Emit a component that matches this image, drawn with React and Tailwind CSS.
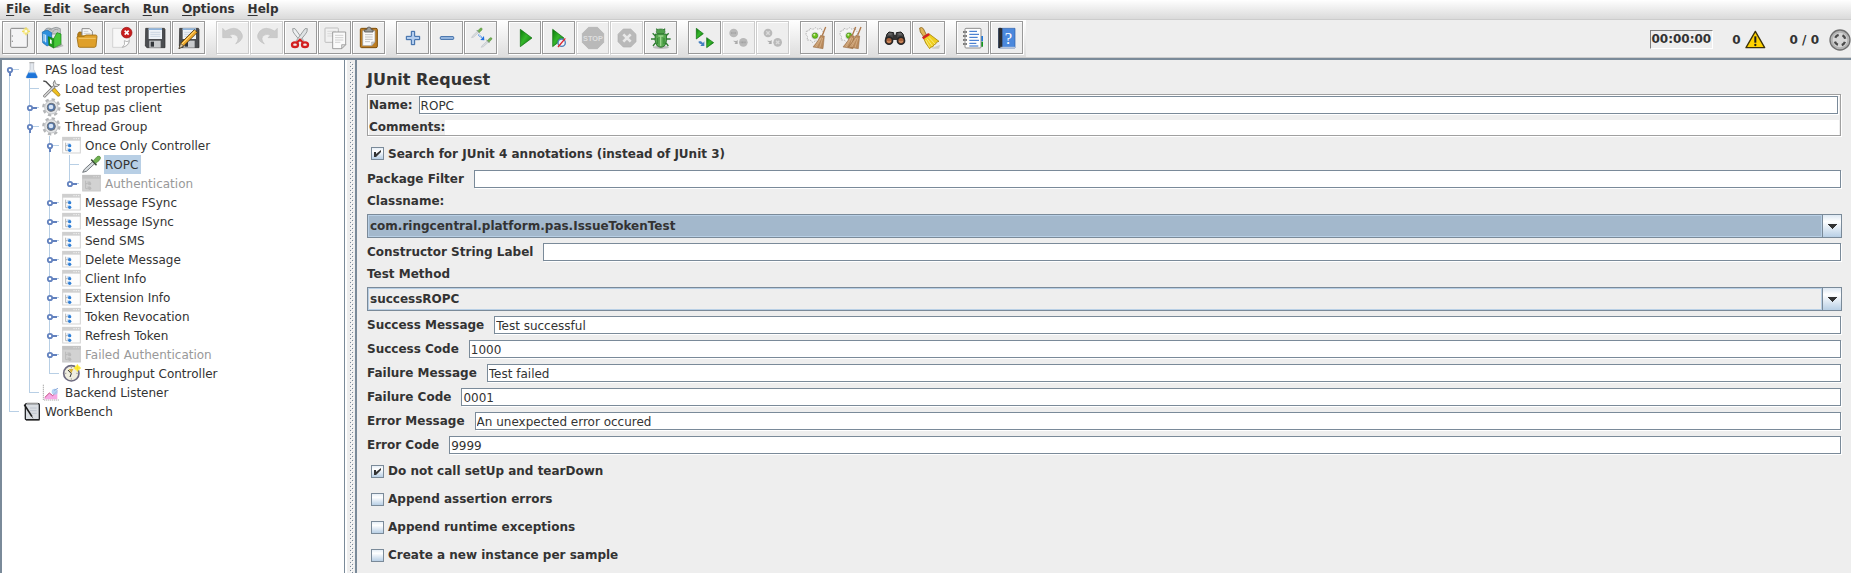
import React, { useId } from "react";

const page = { fill: "#fbfbfb", stroke: "#8a8a8a", strokeWidth: 3 };

function Pencil() {
  return (
    <g>
      <path d="M12 74 L17 58 L58 17 L67 25 L26 66 Z" fill="#f0a92a" stroke="#4a3510" strokeWidth="2.5" />
      <path d="M20 61 L60 20" stroke="#ffe08a" strokeWidth="3" />
      <path d="M12 74 L17 58 L26 66 Z" fill="#e8cfa0" stroke="#333" strokeWidth="2" />
    </g>
  );
}

function Floppy() {
  return (
    <g>
      <path d="M14 13 H70 L72 16 V71 H18 L13 66 Z" fill="#4b4d50" stroke="#2b2b2b" strokeWidth="2" />
      <rect x="23" y="13" width="40" height="32" fill="#eef3f8" />
      <path d="M23 13 H63 V18 H23 Z" fill="#8fb4dc" />
      <path d="M28 25 H58 M28 31 H58 M28 37 H58" stroke="#b9c7d6" strokeWidth="2" />
      <rect x="25" y="50" width="34" height="21" fill="#c9cbcd" />
      <rect x="29" y="53" width="10" height="15" fill="#33363a" />
    </g>
  );
}

function Dropper({ x, y, s = 1, edge = "#5b6166", collar = "#3a4a3a" }) {
  return (
    <g transform={`translate(${x} ${y}) scale(${s})`}>
      <path d="M1 50 L6 41 L32 17 L38 23 L12 47 Z" fill="#d8dde0" stroke={edge} strokeWidth="2.5" />
      <path d="M28 13 L41 27" stroke={collar} strokeWidth="5" strokeLinecap="round" />
      <path d="M33 15 L44 3 Q51 -1 54 4 Q56 9 50 15 L40 23 Z" fill="#6fb04f" stroke="#4b8436" strokeWidth="2" />
    </g>
  );
}

function Octagon({ a, b, fill }) {
  const c = (b - a) * 0.29;
  return (
    <path
      d={`M${a + c} ${a} H${b - c} L${b} ${a + c} V${b - c} L${b - c} ${b} H${a + c} L${a} ${b - c} V${a + c} Z`}
      fill={fill}
      stroke="#b0b0b0"
      strokeWidth="2"
    />
  );
}

function GearPage() {
  return (
    <g>
      <path d="M10 22 L18 20 L20 13 L30 16 L38 11 L45 16 L54 12 L57 20 L63 26 L58 34 L62 44 L54 48 L48 54 L38 50 L28 55 L22 48 L12 48 L14 38 L9 32 Z" fill="#f5f5f5" stroke="#a9a9a9" strokeWidth="2.5" strokeDasharray="5 3" />
      <circle cx="36" cy="35" r="12" fill="#dcdcdc" />
      <circle cx="36" cy="35" r="8" fill="#6cc21c" stroke="#3f8d12" strokeWidth="2" />
      <circle cx="34" cy="32" r="3" fill="#d8f5a8" />
    </g>
  );
}

function WoodBroom({ x = 0 }) {
  return (
    <g transform={`translate(${x} 0)`}>
      <path d="M68 9 L58 34" stroke="#b0794a" strokeWidth="4" />
      <path d="M53 34 L64 36 Q62 58 60 74 L30 69 Q46 52 53 34 Z" fill="#b98a5c" stroke="#94683e" strokeWidth="1.5" />
      <path d="M56 40 L40 69 M59 42 L50 71 M53 42 L36 68" stroke="#dfbd94" strokeWidth="2" />
    </g>
  );
}

const GreenGrad = ({ id }) => (
  <defs>
    <linearGradient id={id} x1="0" y1="0" x2="1" y2="1">
      <stop offset="0" stopColor="#087a08" />
      <stop offset="0.45" stopColor="#35b52b" />
      <stop offset="1" stopColor="#047004" />
    </linearGradient>
  </defs>
);

function Play({ d }) {
  const id = useId();
  return (
    <g>
      <GreenGrad id={id} />
      <path d={d} fill={`url(#${id})`} stroke="#0a6d0a" strokeWidth="2" strokeLinejoin="round" />
    </g>
  );
}

const undoShape = "M11 13 L19 21 Q48 4 64 22 Q82 44 50 60 Q64 42 51 34 Q42 28 32 34 L39 41 L11 41 Z";

const art = {
  new: (
    <g>
      <rect x="17" y="13" width="50" height="57" rx="3" fill="#ececee" stroke="#858585" strokeWidth="3" />
      <rect x="20" y="16" width="44" height="51" fill="#f4f4f5" />
      <path d="M22 34 V38 M22 50 V54" stroke="#888" strokeWidth="3" />
      <circle cx="63" cy="22" r="10" fill="#f7ea8e" opacity="0.8" />
      <path d="M63 10 V34 M51 22 H75" stroke="#f2dc4a" strokeWidth="3" />
      <circle cx="63" cy="22" r="4" fill="#fffdf0" />
    </g>
  ),
  templates: (
    <g>
      <path d="M16 22 Q20 8 38 14 Q52 6 64 14 V30 H18 Z" fill="#c6c9cb" stroke="#7d8285" strokeWidth="2" />
      <path d="M24 24 Q30 12 40 18 M40 26 Q46 12 58 18" stroke="#888" strokeWidth="2" fill="none" />
      <path d="M10 24 L24 18 L38 26 V60 L24 66 L11 56 Z" fill="#2d8fdc" stroke="#1565a8" strokeWidth="2" />
      <path d="M15 30 V52 M20 32 V55" stroke="#e6f3ff" strokeWidth="3" />
      <path d="M28 38 L44 44 V72 L30 64 Z" fill="#1e9a1c" stroke="#0f6d10" strokeWidth="2" />
      <path d="M44 44 L54 26 L66 30 V62 L44 72 Z" fill="#46c83a" stroke="#12800f" strokeWidth="2" />
      <path d="M33 46 V58 L38 60 V48 Z" fill="#fff" />
      <path d="M66 58 L74 66 L56 72 H44" fill="#8a8a8a" opacity="0.5" />
    </g>
  ),
  open: (
    <g>
      <path d="M14 30 L18 24 H26 V40 H14 Z" fill="#b97e12" stroke="#8c5e0c" strokeWidth="2" />
      <path d="M27 40 V14 H49 L58 22 V40 Z" {...page} />
      <path d="M32 22 H46 M32 28 H53 M32 34 H53" stroke="#b5b5b5" strokeWidth="2" />
      <path d="M18 34 H68 V66 H18 Z" fill="#c28a1a" />
      <path d="M12 40 Q12 37 16 37 H34 L38 33 H68 Q72 33 72 38 L69 66 Q68 70 64 70 H20 Q16 70 16 66 Z" fill="#dfa02a" stroke="#9c6b10" strokeWidth="2.5" />
      <path d="M17 43 H68" stroke="#f4c96c" strokeWidth="3" />
    </g>
  ),
  close: (
    <g>
      <path d="M17 13 H67 V52 Q66 66 46 70 H17 Z" fill="#f7f7f7" stroke="#c4c4c4" strokeWidth="2" />
      <path d="M46 70 Q56 62 52 50 Q60 56 67 50 Q64 66 46 70 Z" fill="#fff" stroke="#999" strokeWidth="2" />
      <circle cx="59" cy="26" r="16" fill="#c81e1e" stroke="#951010" strokeWidth="2" />
      <path d="M53 20 L65 32 M65 20 L53 32" stroke="#fff" strokeWidth="5" />
    </g>
  ),
  save: <Floppy />,
  saveas: (
    <g>
      <Floppy />
      <Pencil />
    </g>
  ),
  undo: <path d={undoShape} fill="#cbcbcb" stroke="#bdbdbd" strokeWidth="1.5" />,
  redo: <path d={undoShape} transform="translate(84 0) scale(-1 1)" fill="#cbcbcb" stroke="#bdbdbd" strokeWidth="1.5" />,
  cut: (
    <g>
      <path d="M17 14 Q16 24 24 32 L44 56 L50 50 L24 14 Z" fill="#eceff0" stroke="#8b8f90" strokeWidth="2.5" />
      <path d="M61 14 Q62 24 54 32 L34 56 L28 50 L54 14 Z" fill="#dfe3e4" stroke="#8b8f90" strokeWidth="2.5" />
      <ellipse cx="24" cy="62" rx="9" ry="7" fill="none" stroke="#d31f1f" strokeWidth="7" />
      <ellipse cx="54" cy="62" rx="9" ry="7" fill="none" stroke="#d31f1f" strokeWidth="7" />
      <path d="M30 55 L39 47 L48 55" stroke="#d31f1f" strokeWidth="6" fill="none" />
    </g>
  ),
  copy: (
    <g>
      <rect x="12" y="12" width="40" height="43" rx="2" fill="#f1f1f1" stroke="#b5b5b5" strokeWidth="2.5" />
      <path d="M19 22 H45 M19 29 H45 M19 36 H45" stroke="#cfcfcf" strokeWidth="2" />
      <path d="M35 24 H74 V62 L62 74 H35 Z" fill="#fafafa" stroke="#8e8e8e" strokeWidth="2.5" />
      <path d="M42 34 H67 M42 41 H67 M42 48 H67 M42 55 H58" stroke="#bcbcbc" strokeWidth="2" />
      <path d="M62 74 V62 H74 Z" fill="#ddd" stroke="#8e8e8e" strokeWidth="2" />
    </g>
  ),
  paste: (
    <g>
      <rect x="16" y="13" width="51" height="58" rx="4" fill="#bd7d22" stroke="#7d4d0a" strokeWidth="3" />
      <path d="M23 20 H60 V54 L50 65 H23 Z" fill="#fafafa" stroke="#999" strokeWidth="2" />
      <path d="M30 32 H53 M30 39 H53 M30 46 H53 M30 53 H45" stroke="#b4b4b4" strokeWidth="2.5" />
      <path d="M50 65 V54 H60 Z" fill="#d0d0d0" stroke="#999" strokeWidth="1.5" />
      <path d="M29 24 V17 H35 Q36 9 42 9 Q48 9 49 17 H54 V24 Z" fill="#9b9d9b" stroke="#555" strokeWidth="2.5" />
    </g>
  ),
  plus: <path d="M37 22 H47 V37 H62 V47 H47 V62 H37 V47 H22 V37 H37 Z" fill="#b3cdee" stroke="#3465a4" strokeWidth="3" strokeLinejoin="round" />,
  minus: <rect x="22" y="38" width="40" height="8" rx="2" fill="#a5c3e8" stroke="#3465a4" strokeWidth="3" />,
  toggle: (
    <g>
      <Dropper x={13} y={11} s={0.6} edge="#b4b9bc" collar="#7d907d" />
      <Dropper x={42} y={40} s={0.6} edge="#b4b9bc" collar="#7d907d" />
      <path d="M34 32 L46 42" stroke="#2f7fe8" strokeWidth="4" strokeDasharray="3 2" />
      <path d="M52 49 L51 36 L40 48 Z" fill="#1d6fe0" />
    </g>
  ),
  play: <Play d="M28 16 L63 42 L28 68 Z" />,
  playfast: (
    <g>
      <Play d="M23 16 L57 42 L23 68 Z" />
      <circle cx="50" cy="56" r="11" fill="#eef2f8" stroke="#4f7fb8" strokeWidth="4" />
      <path d="M39 69 L61 43" stroke="#e0242c" strokeWidth="4" />
    </g>
  ),
  stop: (
    <g>
      <Octagon a={10} b={74} fill="#b9b9b9" />
      <text x="42" y="50" textAnchor="middle" fontSize="22" fontWeight="700" fontFamily="Liberation Sans, sans-serif" fill="#dedede">STOP</text>
    </g>
  ),
  shutdown: (
    <g>
      <Octagon a={15} b={69} fill="#b9b9b9" />
      <path d="M31 31 L53 53 M53 31 L31 53" stroke="#e8e8e8" strokeWidth="8" />
    </g>
  ),
  bug: (
    <g>
      <ellipse cx="42" cy="70" rx="24" ry="5" fill="#bdbdbd" />
      <path d="M28 14 L34 22 M54 14 L48 22 M17 28 L25 36 L29 34 M65 28 L57 36 L53 34 M12 45 H28 M54 45 H71 M18 66 L24 58 L30 56 M64 66 L58 58 L52 56" stroke="#2f7d32" strokeWidth="4" fill="none" />
      <ellipse cx="41" cy="23" rx="13" ry="8" fill="#4f9f4a" stroke="#256b28" strokeWidth="2" />
      <path d="M25 30 H58 Q62 50 54 64 Q42 76 29 64 Q21 50 25 30 Z" fill="#57a84f" stroke="#256b28" strokeWidth="2.5" />
      <path d="M34 36 H49 M41 36 V66" stroke="#9bd48c" strokeWidth="4" />
      <path d="M32 42 V60 M51 42 V60" stroke="#348a35" strokeWidth="3" />
    </g>
  ),
  remotestart: (
    <g>
      <Play d="M16 13 L37 29 L16 45 Z" />
      <Play d="M47 41 L68 56 L47 71 Z" />
      <path d="M23 52 L30 52 L36 57 L40 52 V66 H28 L32 61 Q26 60 23 56 Z" fill="#4680c0" />
    </g>
  ),
  remotestop: (
    <g>
      <circle cx="26" cy="27" r="13" fill="#b9b9b9" />
      <circle cx="55" cy="55" r="13" fill="#b9b9b9" />
      <path d="M18 27 H34 M47 55 H63" stroke="#a2a2a2" strokeWidth="5" strokeDasharray="3 1" />
      <path d="M24 50 L34 51 L38 48 V60 H28 L32 56 Z" fill="#ababab" />
    </g>
  ),
  remoteshut: (
    <g>
      <circle cx="27" cy="27" r="13" fill="#b9b9b9" />
      <circle cx="56" cy="55" r="13" fill="#b9b9b9" />
      <path d="M22 22 L32 32 M32 22 L22 32 M51 50 L61 60 M61 50 L51 60" stroke="#dadada" strokeWidth="4" />
      <path d="M24 50 L34 51 L38 48 V60 H28 L32 56 Z" fill="#ababab" />
    </g>
  ),
  clear: (
    <g>
      <GearPage />
      <WoodBroom />
    </g>
  ),
  clearall: (
    <g>
      <GearPage />
      <WoodBroom x={-12} />
      <WoodBroom x={4} />
    </g>
  ),
  search: (
    <g>
      <path d="M18 30 L24 24 L38 26 V44 H14 Z M66 30 L60 24 L46 26 V44 H70 Z" fill="#4a4a4a" stroke="#1d1d1d" strokeWidth="3" strokeLinejoin="round" />
      <rect x="35" y="32" width="14" height="16" fill="#333" />
      <circle cx="24" cy="50" r="13" fill="#262626" />
      <circle cx="60" cy="50" r="13" fill="#262626" />
      <circle cx="24" cy="50" r="8" fill="#a8613a" />
      <circle cx="60" cy="50" r="8" fill="#a8613a" />
      <path d="M19 52 Q24 58 29 52 M55 52 Q60 58 65 52" stroke="#e6a878" strokeWidth="3" fill="none" />
      <path d="M22 30 H32 M52 30 H62" stroke="#999" strokeWidth="2" />
    </g>
  ),
  broom: (
    <g>
      <path d="M56 70 L76 62 L72 74 H50 Z" fill="#b7b7b7" opacity="0.6" />
      <path d="M14 12 Q20 8 25 14 L34 32 L26 38 L16 24 Z" fill="#e0b458" stroke="#8b6518" strokeWidth="2.5" />
      <path d="M24 38 L43 30 L72 52 Q62 54 62 60 Q54 62 54 68 Q46 68 44 74 Q30 58 24 38 Z" fill="#efcf1f" stroke="#a8860a" strokeWidth="2.5" />
      <path d="M36 44 L52 66 M42 40 L60 60 M32 48 L44 70" stroke="#fbee8c" strokeWidth="2.5" />
      <path d="M21 40 L40 27 L45 33 L25 46 Z" fill="#d32323" />
    </g>
  ),
  notebook: (
    <g>
      <path d="M66 36 H72 V52 H66 Z" fill="#1f7ae0" />
      <path d="M66 53 H72 V68 H66 Z" fill="#0f9a1a" />
      <rect x="18" y="13" width="48" height="59" rx="3" fill="#fdfdfd" stroke="#8d8d8d" strokeWidth="3" />
      <path d="M31 22 H54 M31 31 H60 M31 40 H56 M31 49 H60 M31 58 H52 M31 66 H58" stroke="#2868c8" strokeWidth="3" />
      <path d="M12 24 H24 M12 36 H24 M12 48 H24 M12 60 H24" stroke="#555" strokeWidth="5" strokeDasharray="5 2" />
    </g>
  ),
  help: (
    <g>
      <path d="M17 13 H66 V72 H17 Z" fill="#4b88dc" stroke="#2e5ea8" strokeWidth="2" />
      <path d="M16 13 Q20 10 28 13 V72 H16 Z" fill="#2a2c30" />
      <path d="M22 70 H66" stroke="#cfd7e2" strokeWidth="3" />
      <text x="46" y="59" textAnchor="middle" fontSize="50" fontFamily="Liberation Serif, serif" fill="#fff">?</text>
    </g>
  ),
};

const groups = [
  [["new", "New"], ["templates", "Templates"], ["open", "Open"], ["close", "Close"], ["save", "Save"], ["saveas", "Save as"]],
  [["undo", "Undo", true], ["redo", "Redo", true], ["cut", "Cut"], ["copy", "Copy"], ["paste", "Paste"]],
  [["plus", "Expand all"], ["minus", "Collapse all"], ["toggle", "Toggle"]],
  [["play", "Start"], ["playfast", "Start no pauses"], ["stop", "Stop", true], ["shutdown", "Shutdown", true], ["bug", "Debug"]],
  [["remotestart", "Remote start all"], ["remotestop", "Remote stop all", true], ["remoteshut", "Remote shutdown all", true]],
  [["clear", "Clear"], ["clearall", "Clear all"]],
  [["search", "Search"], ["broom", "Reset search"]],
  [["notebook", "Function helper"], ["help", "Help"]],
];

function ToolButton({ icon, label, disabled }) {
  return (
    <button
      type="button"
      aria-label={label}
      disabled={disabled}
      className="mr-px flex size-[33px] shrink-0 items-center justify-center border border-[#999999] bg-[#eeeeee] shadow-[inset_1px_1px_0_#ffffff,1px_1px_0_#ffffff] disabled:border-[#cccccc]"
    >
      <svg viewBox="0 0 81 81" className="size-[27px]">{art[icon]}</svg>
    </button>
  );
}

/* ---------- test plan tree ---------- */

function ControllerIcon({ off }) {
  return (
    <g>
      <rect x="2" y="4" width="53" height="47" fill={off ? "#d2d2d2" : "#fdfdfd"} stroke={off ? "#cacaca" : "#d3d3d3"} strokeWidth="3" />
      <rect x="1" y="3" width="55" height="11" fill={off ? "#c2c2c2" : "#cfcfcf"} />
      <path d="M34 8 H52" stroke={off ? "#d8d8d8" : "#f0f0f0"} strokeWidth="3" strokeDasharray="4 3" />
      <path d="M11 20 V44 H18 M11 29 H18" stroke={off ? "#b8b8b8" : "#b4b4b4"} strokeWidth="3" fill="none" />
      <path d="M16 22 H25 V30 H16 Z M16 37 H25 V45 H16 Z" fill={off ? "#c2c2c2" : "#b4cfee"} />
      <circle cx="23" cy="29" r="5" fill={off ? "#bababa" : "#2f7fd6"} />
      <circle cx="23" cy="43" r="5" fill={off ? "#bababa" : "#2f7fd6"} />
    </g>
  );
}

const treeArt = {
  flask: (
    <g>
      <path d="M24 8 H35 V28 L46 50 Q47 54 43 54 H15 Q11 54 13 50 L24 28 Z" fill="#e3e8ee" stroke="#b4bac2" strokeWidth="2" />
      <path d="M20 37 H39 L46 50 Q47 54 43 54 H15 Q11 54 13 50 Z" fill="#1d74d8" />
      <path d="M20 38 H39" stroke="#9cc8f4" strokeWidth="3" />
      <path d="M22 8 H37" stroke="#aaa" strokeWidth="3" />
    </g>
  ),
  tools: (
    <g>
      <path d="M4 6 L12 8 L34 31" stroke="#4c4c4c" strokeWidth="4" fill="none" />
      <path d="M31 29 L38 27 L54 46 Q55 52 48 52 L30 35 Z" fill="#f0c020" stroke="#8a6a08" strokeWidth="2" />
      <path d="M8 51 L38 21" stroke="#777" strokeWidth="9" strokeLinecap="round" />
      <path d="M8 51 L38 21" stroke="#d6d6d6" strokeWidth="5" strokeLinecap="round" />
      <path d="M38 4 Q30 12 36 22 Q46 26 53 17 L44 16 L40 12 Z" fill="#e0e0e0" stroke="#777" strokeWidth="2.5" />
    </g>
  ),
  gear: (
    <g>
      <circle cx="28" cy="28" r="24" fill="none" stroke="#b3b5b7" strokeWidth="7" strokeDasharray="10 8.85" />
      <circle cx="28" cy="28" r="20" fill="#e2e4e6" stroke="#b9bbbd" strokeWidth="2.5" />
      <circle cx="28" cy="28" r="12" fill="#5577a8" stroke="#6b7078" strokeWidth="3" />
      <circle cx="27" cy="27" r="7" fill="#d6e4f6" />
    </g>
  ),
  ctrl: <ControllerIcon />,
  ctrlOff: <ControllerIcon off />,
  dropper: <Dropper x={1} y={2} />,
  clock: (
    <g>
      <circle cx="28" cy="28" r="23" fill="#f0eedf" stroke="#6e6b80" strokeWidth="5" />
      <path d="M28 28 L20 15 H34 Z" fill="#d9b23a" />
      <path d="M28 29 L18 18 M28 29 L24 39" stroke="#333" strokeWidth="3" />
      <path d="M28 9 V13 M28 43 V47 M9 28 H13 M43 28 H47" stroke="#888" strokeWidth="2.5" />
      <circle cx="46" cy="12" r="8" fill="#fff04a" />
      <path d="M46 1 V23 M35 12 H57" stroke="#f8e020" strokeWidth="3" />
    </g>
  ),
  chart: (
    <g>
      <path d="M4 5 V51 H51" stroke="#9a9a9a" strokeWidth="2.5" fill="none" strokeDasharray="4 2" />
      <path d="M8 49 V44 L22 30 L32 38 L46 26 V49 Z" fill="#f6a8e4" />
      <path d="M8 44 L22 30 L32 38 L46 24" stroke="#c2477e" strokeWidth="3" fill="none" />
      <circle cx="38" cy="26" r="9" fill="#a8cdf2" opacity="0.85" />
      <path d="M36 22 L48 16" stroke="#8aa8d8" strokeWidth="3" />
    </g>
  ),
  bench: (
    <g>
      <rect x="10" y="5" width="42" height="48" rx="3" fill="#d9dde2" stroke="#26282b" strokeWidth="4" />
      <path d="M14 4 H48" stroke="#9a9a9a" strokeWidth="4" />
      <path d="M24 18 H44 M24 26 H44 M28 34 H44" stroke="#b2bac6" strokeWidth="2" />
      <path d="M7 8 L30 44" stroke="#1b1b1b" strokeWidth="5" />
      <path d="M30 44 L33 49" stroke="#777" strokeWidth="3" />
      <path d="M12 54 H53" stroke="#1b1b1b" strokeWidth="3" />
    </g>
  ),
};

/* guides: one letter per 20px column before the icon.
   "|" line passes through, "t" leaf branch, "l" last leaf,
   "c" collapsed node, "e" last collapsed node, "o" open node, "r" open root */
const rows = [
  ["r", "flask", "PAS load test"],
  ["|t", "tools", "Load test properties"],
  ["|c", "gear", "Setup pas client"],
  ["|o", "gear", "Thread Group"],
  ["||o", "ctrl", "Once Only Controller"],
  ["|||t", "dropper", "ROPC"],
  ["|||e", "ctrlOff", "Authentication"],
  ["||c", "ctrl", "Message FSync"],
  ["||c", "ctrl", "Message ISync"],
  ["||c", "ctrl", "Send SMS"],
  ["||c", "ctrl", "Delete Message"],
  ["||c", "ctrl", "Client Info"],
  ["||c", "ctrl", "Extension Info"],
  ["||c", "ctrl", "Token Revocation"],
  ["||c", "ctrl", "Refresh Token"],
  ["||c", "ctrlOff", "Failed Authentication"],
  ["||l", "clock", "Throughput Controller"],
  ["|l", "chart", "Backend Listener"],
  ["l", "bench", "WorkBench"],
];

function Guide({ kind }) {
  const up = "|tlcoe".includes(kind);
  const down = "|tcor".includes(kind);
  const node = "coer".includes(kind);
  return (
    <svg viewBox="0 0 20 19" className="h-[19px] w-5 shrink-0">
      {up && <rect x="7" y="0" width="1" height="10" fill="#b8cfe5" />}
      {down && <rect x="7" y="9" width="1" height="10" fill="#b8cfe5" />}
      {kind !== "|" && <rect x="7" y="9" width="10" height="1" fill="#b8cfe5" />}
      {node && (
        <g>
          {"or".includes(kind) ? (
            <rect x="7" y="11" width="2" height="5" fill="#6382bf" />
          ) : (
            <rect x="10" y="9" width="5" height="2" fill="#6382bf" />
          )}
          <circle cx="8" cy="10" r="2.2" fill="#fff" stroke="#6382bf" strokeWidth="1.8" />
        </g>
      )}
    </svg>
  );
}

function Tree() {
  return (
    <ul role="tree" className="w-[343px] shrink-0 border-r border-[#7a8a99] bg-white">
      {rows.map(([guides, icon, name]) => (
        <li
          key={name}
          role="treeitem"
          aria-selected={name === "ROPC"}
          className={`flex h-[19px] items-center ${icon === "ctrlOff" ? "text-[#999999]" : "text-[#333333]"}`}
        >
          {guides.split("").map((g, i) => (
            <Guide key={i} kind={g} />
          ))}
          <svg viewBox="0 0 60 57" className="h-[19px] w-5 shrink-0">{treeArt[icon]}</svg>
          <span className={`ml-[2px] h-[19px] pr-[3px] pl-px leading-[21px] ${name === "ROPC" ? "bg-[#b8cfe5]" : ""}`}>{name}</span>
        </li>
      ))}
    </ul>
  );
}

function Divider() {
  return (
    <div className="w-[10px] shrink-0 border-l-2 border-white bg-[#eeeeee] pt-[2px] pl-[3px]">
      <svg className="h-full w-[4px]">
        <defs>
          <pattern id="bumps" width="4" height="4" patternUnits="userSpaceOnUse">
            <rect width="1" height="1" fill="#7a8a99" />
            <rect x="2" y="2" width="1" height="1" fill="#7a8a99" />
            <rect x="1" y="1" width="1" height="1" fill="#ffffff" />
            <rect x="3" y="3" width="1" height="1" fill="#ffffff" />
          </pattern>
        </defs>
        <rect width="4" height="100%" fill="url(#bumps)" />
      </svg>
    </div>
  );
}

/* ---------- sampler form ---------- */

const fieldBox =
  "mr-px mb-px h-[18px] min-w-0 flex-1 border border-[#7a8a99] bg-white px-px pt-[2px] leading-[14px] text-[#333333] shadow-[1px_1px_0_#ffffff] outline-none";

function Field({ id, label, value = "", tight = false }) {
  return (
    <div className="flex h-[19px] items-center">
      <label htmlFor={id} className={`font-bold leading-[19px] ${tight ? "pr-[6px]" : "pr-[10px]"}`}>{label}</label>
      <input id={id} type="text" defaultValue={value} className={fieldBox} />
    </div>
  );
}

function Combo({ id, label, value, focused }) {
  return (
    <div>
      <label htmlFor={id} className="block h-[25px] font-bold leading-[25px]">{label}</label>
      <div className={`mb-[5px] grid h-6 grid-cols-[1fr_19px] border border-[#7a8a99] ${focused ? "bg-[#a3b8cc]" : "bg-[#eeeeee]"}`}>
        <select
          id={id}
          defaultValue={value}
          className="col-span-2 col-start-1 row-start-1 mr-[19px] appearance-none border border-[#b8cfe5] bg-transparent pl-px font-bold outline-none"
        >
          <option>{value}</option>
        </select>
        <span className="pointer-events-none col-start-2 row-start-1 flex items-center justify-center border-l border-[#7a8a99] bg-linear-to-b from-[#dde8f3] via-white via-30% to-[#b8cfe5]">
          <svg viewBox="0 0 10 5" className="h-[5px] w-[10px]" shapeRendering="crispEdges">
            <path d="M0 0 H10 L5 5 Z" fill="#333333" />
          </svg>
        </span>
      </div>
    </div>
  );
}

function Check({ label, checked = false, tall = false }) {
  return (
    <label className={`flex items-center pl-1 font-bold ${tall ? "h-[33px]" : "h-7"}`}>
      <span className="mr-1 grid size-[13px] shrink-0">
        <input
          type="checkbox"
          defaultChecked={checked}
          className="peer col-start-1 row-start-1 size-[13px] appearance-none border border-[#7a8a99] bg-linear-to-b from-[#e6eef6] via-white via-30% to-[#b8cfe5]"
        />
        <svg viewBox="0 0 13 13" className="pointer-events-none invisible col-start-1 row-start-1 size-[13px] peer-checked:visible">
          <path d="M3 5 H5 V7 L10 3 V5 L5 10 H3 Z" fill="#333333" />
        </svg>
      </span>
      {label}
    </label>
  );
}

function Form() {
  return (
    <main className="min-w-0 flex-1 border-l-2 border-[#7a8a99] bg-[#eeeeee] pr-[9px] pl-[10px]">
      <h1 className="h-[34px] text-base leading-[39px] font-bold">JUnit Request</h1>
      <div className="mr-px mb-px border border-[#a0a0a0] px-px pt-px shadow-[1px_1px_0_#ffffff,inset_1px_1px_0_#ffffff]">
        <Field id="name" label="Name:" value="ROPC" tight />
        <div className="mt-[5px] flex h-[15px] items-center">
          <label htmlFor="comments" className="font-bold leading-[15px]">Comments:</label>
          <input id="comments" type="text" className="h-[15px] min-w-0 flex-1 bg-white outline-none" />
        </div>
      </div>
      <Check label="Search for JUnit 4 annotations (instead of JUnit 3)" checked tall />
      <Field id="package" label="Package Filter" />
      <Combo id="classname" label="Classname:" value="com.ringcentral.platform.pas.IssueTokenTest" focused />
      <Field id="constructor" label="Constructor String Label" />
      <Combo id="method" label="Test Method" value="successROPC" />
      <div className="mb-[2px] flex flex-col gap-[5px]">
        <Field id="smsg" label="Success Message" value="Test successful" />
        <Field id="scode" label="Success Code" value="1000" />
        <Field id="fmsg" label="Failure Message" value="Test failed" />
        <Field id="fcode" label="Failure Code" value="0001" />
        <Field id="emsg" label="Error Message" value="An unexpected error occured" />
        <Field id="ecode" label="Error Code" value="9999" />
      </div>
      <Check label="Do not call setUp and tearDown" checked />
      <Check label="Append assertion errors" />
      <Check label="Append runtime exceptions" />
      <Check label="Create a new instance per sample" />
    </main>
  );
}

function Status() {
  return (
    <div className="ml-auto flex items-center pt-[2px] font-bold">
      <output className="mr-[19px] h-[19px] border border-t-[#808080] border-r-white border-b-white border-l-[#808080] px-px leading-[17px]">00:00:00</output>
      <span>0</span>
      <svg viewBox="0 0 63 57" className="mr-[24px] ml-1 h-[19px] w-[21px]">
        <path d="M31 4 L59 53 H3 Z" fill="#ffd200" stroke="#3c3108" strokeWidth="4" strokeLinejoin="round" />
        <path d="M31 19 V38" stroke="#1d1d1d" strokeWidth="6" />
        <circle cx="31" cy="45" r="3.5" fill="#1d1d1d" />
      </svg>
      <span>0 / 0</span>
      <svg viewBox="0 0 66 66" className="ml-[10px] size-[22px]">
        <circle cx="33" cy="33" r="30" fill="#b4b4b4" stroke="#6f6f6f" strokeWidth="4" />
        <circle cx="33" cy="33" r="22" fill="#d6d6d6" />
        <circle cx="33" cy="33" r="16" fill="none" stroke="#4a4a4a" strokeWidth="7" strokeDasharray="13 12.1" strokeDashoffset="-6" />
      </svg>
    </div>
  );
}

const menus = [
  ["F", "ile"],
  ["E", "dit"],
  ["", "Search"],
  ["R", "un"],
  ["O", "ptions"],
  ["H", "elp"],
];

export default function App() {
  return (
    <div className="flex min-h-screen flex-col overflow-hidden bg-[#eeeeee] font-['DejaVu_Sans',sans-serif] text-[12px] text-[#333333]">
      <nav className="flex h-5 items-start gap-[13px] border-b border-[#cccccc] bg-linear-to-b from-white to-[#dadada] pl-[6px]">
        {menus.map(([key, rest]) => (
          <button key={key + rest} type="button" className="h-[18px] font-bold leading-[17px]">
            <span className="underline underline-offset-2">{key}</span>
            {rest}
          </button>
        ))}
      </nav>
      <header className="flex h-[38px] items-stretch border-b border-[#cccccc]">
        <div className="flex gap-[10px] bg-linear-to-b from-white to-[#dddddd] pt-px pr-[2px] pl-[2px]">
          {groups.map((g, i) => (
            <div key={i} className="flex">
              {g.map(([icon, label, disabled]) => (
                <ToolButton key={icon} icon={icon} label={label} disabled={disabled} />
              ))}
            </div>
          ))}
        </div>
        <Status />
      </header>
      <div className="flex flex-1 border-t-2 border-[#7a8a99]">
        <div className="flex border-l-2 border-[#7a8a99]">
          <Tree />
          <Divider />
        </div>
        <Form />
      </div>
    </div>
  );
}
